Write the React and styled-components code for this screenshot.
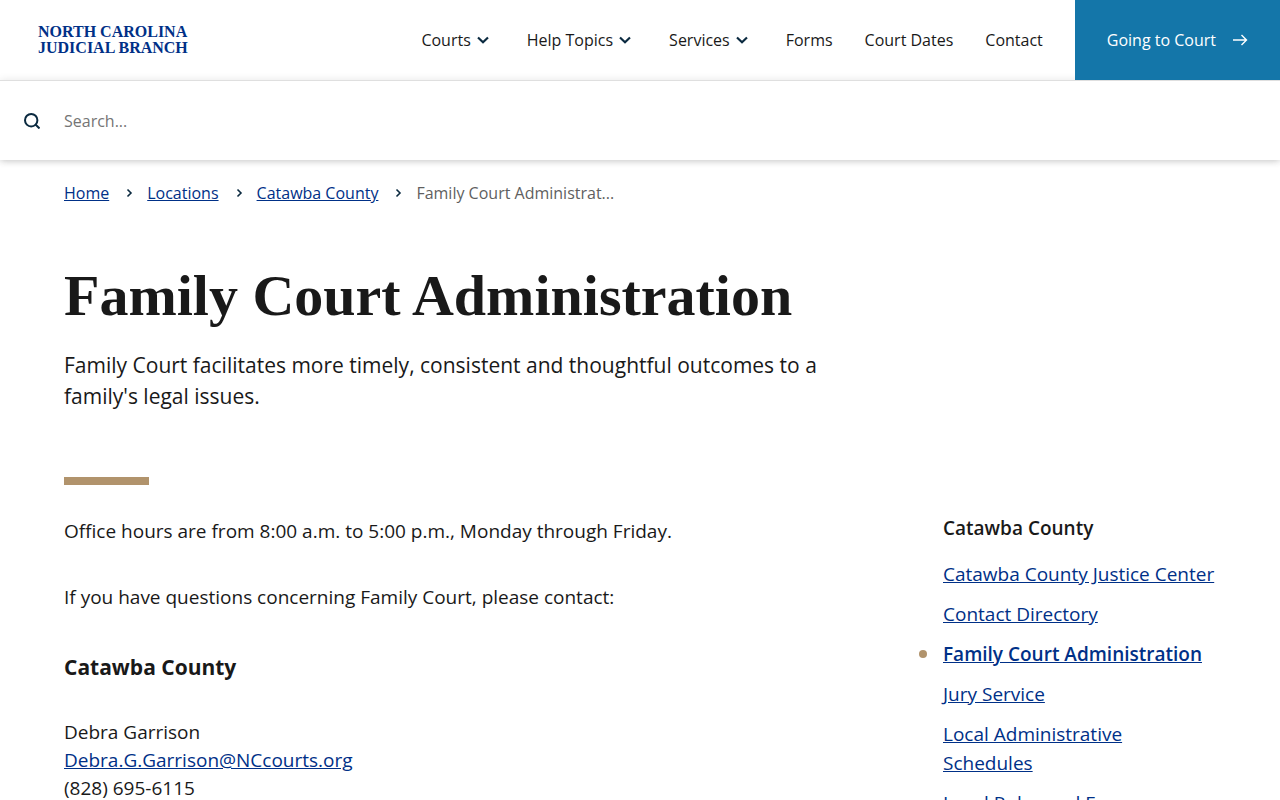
import React, { useState } from "react";
import styled, { createGlobalStyle, css } from "styled-components";

const navItems = [
  { name: "Courts", hasMenu: true },
  { name: "Help Topics", hasMenu: true },
  { name: "Services", hasMenu: true },
  { name: "Forms" },
  { name: "Court Dates" },
  { name: "Contact" },
];

const crumbs = ["Home", "Locations", "Catawba County"];

const sideLinks = [
  "Catawba County Justice Center",
  "Contact Directory",
  "Family Court Administration",
  "Jury Service",
  "Local Administrative Schedules",
  "Local Rules and Forms",
];

const ChevronDown = () => (
  <svg width="24" height="24" viewBox="0 0 24 24" aria-hidden="true">
    <path d="M7 9.5l5 4.7 5-4.7" fill="none" stroke="#0b2a40" strokeWidth="2.2" />
  </svg>
);

const ChevronRight = () => (
  <svg width="10" height="10" viewBox="0 0 10 10" aria-hidden="true">
    <path d="M4.5 1.5L8 5 4.5 8.5" fill="none" stroke="#0b2a40" strokeWidth="1.6" />
  </svg>
);

const ArrowRight = () => (
  <svg width="16" height="16" viewBox="0 0 16 16" aria-hidden="true">
    <path
      d="M1 8h13.5M9.5 3L14.5 8l-5 5"
      fill="none"
      stroke="#fff"
      strokeWidth="1.4"
    />
  </svg>
);

const SearchIcon = () => (
  <svg width="16" height="16" viewBox="0 0 16 16" aria-hidden="true">
    <circle cx="7.2" cy="7.2" r="6.2" fill="none" stroke="#0b2a40" strokeWidth="2" />
    <path d="M11.5 11.5l4 4" stroke="#0b2a40" strokeWidth="2" />
  </svg>
);

const App = () => {
  const [keyword, setKeyword] = useState("");

  return (
    <>
      <GlobalStyle />
      <StHeader>
        <StTopBar>
          <StLogo href="#">
            North Carolina
            <br />
            Judicial Branch
          </StLogo>
          <StNav>
            {navItems.map((item) =>
              item.hasMenu ? (
                <StMenuButton key={item.name} type="button">
                  {item.name}
                  <ChevronDown />
                </StMenuButton>
              ) : (
                <StNavLink key={item.name} href="#">
                  {item.name}
                </StNavLink>
              )
            )}
          </StNav>
          <StCourtLink href="#">
            Going to Court
            <ArrowRight />
          </StCourtLink>
        </StTopBar>
        <StSearchForm onSubmit={(e) => e.preventDefault()}>
          <StSearchButton type="submit" aria-label="Search">
            <SearchIcon />
          </StSearchButton>
          <StSearchInput
            type="text"
            aria-label="Search"
            placeholder="Search..."
            value={keyword}
            onChange={(e) => setKeyword(e.target.value)}
          />
        </StSearchForm>
      </StHeader>

      <StPage>
        <StBreadcrumb aria-label="Breadcrumb">
          {crumbs.map((crumb) => (
            <React.Fragment key={crumb}>
              <StLink href="#">{crumb}</StLink>
              <ChevronRight />
            </React.Fragment>
          ))}
          <span>Family Court Administrat...</span>
        </StBreadcrumb>

        <StTitle>Family Court Administration</StTitle>
        <StLead>
          Family Court facilitates more timely, consistent and thoughtful
          outcomes to a family's legal issues.
        </StLead>
        <StAccentBar />

        <StColumns>
          <StArticle>
            <p>Office hours are from 8:00 a.m. to 5:00 p.m., Monday through Friday.</p>
            <p>If you have questions concerning Family Court, please contact:</p>
            <h2>Catawba County</h2>
            <p>
              Debra Garrison
              <br />
              <StLink href="#">Debra.G.Garrison@NCcourts.org</StLink>
              <br />
              (828) 695-6115
            </p>
          </StArticle>
          <StAside>
            <h2>Catawba County</h2>
            <StSideList>
              {sideLinks.map((name) => (
                <StSideItem
                  key={name}
                  $active={name === "Family Court Administration"}
                >
                  <StLink href="#">{name}</StLink>
                </StSideItem>
              ))}
            </StSideList>
          </StAside>
        </StColumns>
      </StPage>
    </>
  );
};

export default App;

const GlobalStyle = createGlobalStyle`
  * {
    box-sizing: border-box;
  }
  html {
    scrollbar-width: none;
  }
  body {
    margin: 0;
    background: #fff;
    color: #191919;
    font-family: "Open Sans", "Noto Sans", sans-serif;
    font-size: 16px;
    line-height: 24px;
  }
  svg {
    display: block;
    flex-shrink: 0;
  }
`;

const StHeader = styled.header`
  box-shadow: 0 0 8px rgba(0, 0, 0, 0.2);
`;

const StTopBar = styled.div`
  display: flex;
  align-items: center;
  height: 80px;
`;

const StLogo = styled.a`
  margin-left: 38px;
  color: #003087;
  font-family: "Liberation Serif", serif;
  font-size: 16px;
  font-weight: 700;
  line-height: 16px;
  text-decoration: none;
  text-transform: uppercase;
  white-space: nowrap;
`;

const StNav = styled.nav`
  display: flex;
  gap: 32px;
  margin-left: auto;
  margin-right: 32px;
`;

const navText = css`
  color: #191919;
  font-size: 16px;
  line-height: 24px;
  white-space: nowrap;
`;

const StNavLink = styled.a`
  ${navText}
  text-decoration: none;
`;

const StMenuButton = styled.button`
  ${navText}
  display: flex;
  align-items: center;
  padding: 0;
  border: 0;
  background: none;
  font-family: inherit;
  cursor: pointer;
`;

const StCourtLink = styled.a`
  display: flex;
  align-items: center;
  gap: 16px;
  align-self: stretch;
  padding: 0 32px;
  background: #1476a9;
  color: #fff;
  font-weight: 500;
  text-decoration: none;
  white-space: nowrap;
`;

const StSearchForm = styled.form`
  display: flex;
  align-items: center;
  height: 80px;
  border-top: 1px solid #dfdfdf;
  box-shadow: 0 0 8px rgba(0, 0, 0, 0.1);
`;

const StSearchButton = styled.button`
  display: flex;
  padding: 24px;
  border: 0;
  background: none;
  cursor: pointer;
`;

const StSearchInput = styled.input`
  flex: 1;
  padding: 0;
  border: 0;
  outline: 0;
  color: #191919;
  font-family: inherit;
  font-size: 16px;
  line-height: 24px;
  &::placeholder {
    color: #757575;
  }
`;

const StPage = styled.main`
  padding: 21px 64px 64px;
`;

const StLink = styled.a`
  color: #003087;
  text-decoration: underline;
`;

const StBreadcrumb = styled.nav`
  display: flex;
  align-items: center;
  gap: 14px;
  color: #5f5f5f;
`;

const StTitle = styled.h1`
  margin: 56px 0 19px;
  font-family: "Liberation Serif", serif;
  font-size: 58px;
  font-weight: 700;
  line-height: 70px;
`;

const StLead = styled.p`
  max-width: 768px;
  margin: 0;
  font-size: 21px;
  line-height: 31px;
`;

const StAccentBar = styled.div`
  width: 85px;
  height: 8px;
  margin: 65px 0 29px;
  background: #b1936c;
`;

const StColumns = styled.div`
  display: grid;
  grid-template-columns: 1fr 273px;
  column-gap: 112px;
`;

const StArticle = styled.article`
  padding-top: 3px;
  font-size: 19px;
  line-height: 28px;
  p {
    margin: 0 0 38px;
  }
  h2 {
    margin: 42px 0 37px;
    font-size: 21px;
    font-weight: 700;
    line-height: 28px;
  }
`;

const StAside = styled.aside`
  font-size: 19px;
  line-height: 29px;
  h2 {
    margin: 0 0 17px;
    font-size: 19px;
    font-weight: 600;
    line-height: 29px;
  }
`;

const StSideList = styled.ul`
  display: grid;
  row-gap: 11px;
  margin: 0;
  padding: 0;
  list-style: none;
`;

const StSideItem = styled.li`
  position: relative;
  ${({ $active }) =>
    $active &&
    css`
      font-weight: 600;
      &::before {
        content: "";
        position: absolute;
        left: -24px;
        top: 10px;
        width: 8px;
        height: 8px;
        border-radius: 50%;
        background: #b1936c;
      }
    `}
`;
